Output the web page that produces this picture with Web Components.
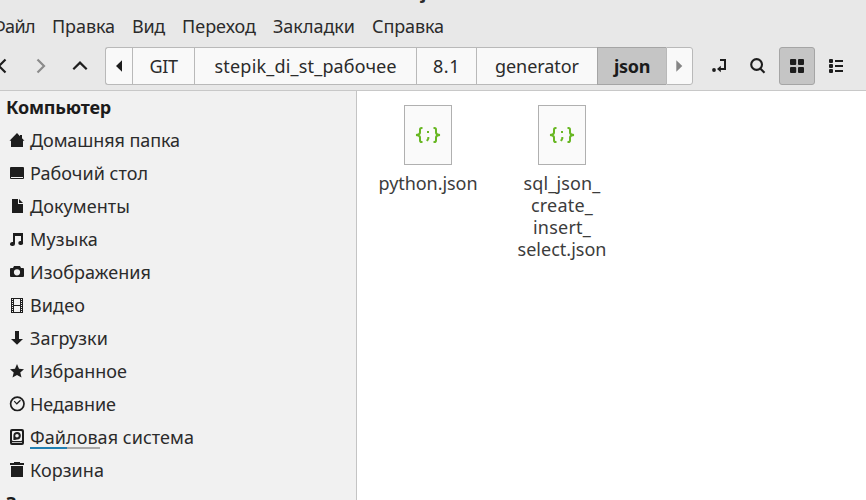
<!DOCTYPE html>
<html lang="ru">
<head>
<meta charset="utf-8">
<title>json</title>
<style>
html,body{margin:0;height:100%;overflow:hidden}
body{font:18px/22px "Noto Sans","Open Sans",sans-serif;color:#2b2b2b}
</style>
</head>
<body>
<file-window></file-window>
<script>
const ICONS = {
  home:'<path d="M8 1 0.5 8.7H2V15H14V8.7H15.5L13 6.2V3H11V4.2Z"/>',
  desktop:'<path d="M2 2H14Q15 2 15 3V13Q15 14 14 14H2Q1 14 1 13V3Q1 2 2 2ZM2 12V13H14V12Z" fill-rule="evenodd"/>',
  doc:'<path d="M3 1H9V6H14V15H3ZM10 1 14 5H10Z"/>',
  music:'<path d="M4 2H14V11.5A2.4 2 0 1 1 12 10V5H6V13A2.5 2 0 1 1 4 11Z"/>',
  camera:'<path d="M5 2H11L12 4H14Q15 4 15 5V12Q15 13 14 13H2Q1 13 1 12V5Q1 4 2 4H4ZM8 5.2A3.1 3.1 0 1 0 8 11.4A3.1 3.1 0 1 0 8 5.2Z" fill-rule="evenodd"/>',
  video:'<path d="M2 1H14V16H2ZM5 2V8H11V2ZM5 9V15H11V9ZM3 2V3H4V2ZM3 4V5H4V4ZM3 6V7H4V6ZM3 8V9H4V8ZM3 10V11H4V10ZM3 12V13H4V12ZM3 14V15H4V14ZM12 2V3H13V2ZM12 4V5H13V4ZM12 6V7H13V6ZM12 8V9H13V8ZM12 10V11H13V10ZM12 12V13H13V12ZM12 14V15H13V14Z" fill-rule="evenodd"/>',
  down:'<path d="M6 1H10V9H14L8 14.7 2 9H6Z"/>',
  star:'<path d="M8 1 10 5.8 15 6.2 11.3 9.6 12.5 14.5 8 12 3.5 14.5 4.7 9.6 1 6.2 6 5.8Z"/>',
  clock:'<g fill="none" stroke="currentColor"><circle cx="8.3" cy="7.8" r="6.7" stroke-width="1.7"/><path d="M5.2 5.2 7.8 7.8 11.5 4.2" stroke-width="1.2"/></g>',
  disk:'<path d="M3 0H13Q15 0 15 2V14Q15 16 13 16H3Q1 16 1 14V2Q1 0 3 0ZM4 2Q3 2 3 3V11Q3 12 4 12H12Q13 12 13 11V3Q13 2 12 2ZM3 13.2V14H13V13.2Z" fill-rule="evenodd"/><path d="M4.4 11V6.8A3.7 3.7 0 1 1 8 10.5L6 11ZM8 5A1.8 1.8 0 1 0 8 8.6A1.8 1.8 0 1 0 8 5Z" fill-rule="evenodd"/>',
  trash:'<path d="M5 0H11V1H15V3H1V1H5ZM2 4H14V15H2Z"/>',
  back:'<path d="M10.5 1.5 4 8 10.5 14.5" fill="none" stroke="currentColor" stroke-width="2.2"/>',
  next:'<path d="M4.5 1.5 11 8 4.5 14.5" fill="none" stroke="currentColor" stroke-width="2.2"/>',
  up:'<path d="M1.3 11.3 8 4.6 14.7 11.3" fill="none" stroke="currentColor" stroke-width="2.2"/>',
  left:'<path d="M11 2.3V13.7L5 8Z"/>',
  right:'<path d="M4.3 2.3V13.7L10.3 8Z"/>',
  path:'<path d="M9 2H14V11H8.5" fill="none" stroke="currentColor" stroke-width="2"/><path d="M9.8 7.7V14.3L6 11Z"/><circle cx="3" cy="12" r="1.9"/>',
  search:'<circle cx="6.6" cy="6.5" r="5.4" fill="none" stroke="currentColor" stroke-width="2.1"/><path d="M10.5 10.7 14.5 14.7" stroke="currentColor" stroke-width="2.1"/>',
  grid:'<rect x="1" y="1" width="6.2" height="6" rx="1"/><rect x="9" y="1" width="6" height="6" rx="1"/><rect x="1" y="9" width="6.2" height="6" rx="1"/><rect x="9" y="9" width="6" height="6" rx="1"/>',
  list:'<rect x="1" y="1" width="4" height="4" rx="1"/><rect x="1" y="6" width="4" height="4" rx="1"/><rect x="1" y="11" width="4" height="4" rx="1"/><path d="M7 2H15V4H7ZM7 7H15V9H7ZM7 12H15V14H7Z"/>'
};
const define = (name, html, after) => customElements.define(name, class extends HTMLElement {
  connectedCallback(){
    if(this.shadowRoot) return;
    this.attachShadow({mode:'open'}).innerHTML = typeof html === 'function' ? html(this) : html;
    if(after) after(this);
  }
});

define('ui-icon', el => `<style>:host{display:block;width:16px;height:16px;flex:none;color:#1d1d1d}svg{display:block;fill:currentColor}</style><svg width="16" height="16" viewBox="0 0 16 16">${ICONS[el.getAttribute('name')]}</svg>`);

/* A label whose letter spacing is adjusted so that it fills its "w" width. */
define('fit-label', el => `<style>:host{display:block;flex:none;white-space:nowrap;line-height:22px;width:${el.getAttribute('w')}px}span{display:inline-block}</style><span>${el.getAttribute('text')}</span>`, el => {
  const s = el.shadowRoot.querySelector('span');
  s.style.letterSpacing = '0px';
  const d = +el.getAttribute('w') - s.getBoundingClientRect().width;
  s.style.letterSpacing = d / s.textContent.length + 'px';
});

define('title-strip', `<style>:host{display:block;height:8px;overflow:hidden;font-weight:700}div{margin:-19px 0 0 421px}</style><div><fit-label w="38" text="json"></fit-label></div>`);

define('menu-bar', `<style>:host{display:flex;height:39px;padding-top:7px;box-sizing:border-box;gap:17px;margin-left:-9px}</style>
${[['Файл',44],['Правка',63],['Вид',33],['Переход',74],['Закладки',82],['Справка',72]].map(a=>`<fit-label text="${a[0]}" w="${a[1]}"></fit-label>`).join('')}`);

define('path-part', `<style>:host{display:flex;align-items:center;justify-content:center;box-sizing:border-box;background:#f9f9f9;border:1px solid #b9b9b9;border-right:0;height:38px}
:host([first]){border-radius:3px 0 0 3px}:host([last]){border-right:1px solid #b9b9b9;border-radius:0 3px 3px 0}
:host([active]){background:#c5c5c5;border-color:#a5a5a5;font-weight:700;color:#1b1b1b}</style><slot></slot>`);

define('tool-bar', `<style>:host{display:flex;height:43px;box-sizing:border-box}
.nav{display:flex;width:105px;height:38px;align-items:center;box-sizing:border-box;flex:none}
.tools{display:flex;height:38px;align-items:center}
.on{display:flex;align-items:center;justify-content:center;box-sizing:border-box;width:36px;height:38px;border:1px solid #a5a5a5;border-radius:3px;background:#c5c5c5;margin:0 13px 0 13px}
.search{margin-left:23px}.path{margin-left:18px}</style>
<div class="nav"><ui-icon name="back" style="margin-left:-5px"></ui-icon><ui-icon name="next" style="margin-left:22px;color:#8b8b8b"></ui-icon><ui-icon name="up" style="margin-left:23px"></ui-icon></div>
<path-part first style="width:27px"><ui-icon name="left"></ui-icon></path-part>
<path-part style="width:62px"><fit-label text="GIT" w="28"></fit-label></path-part>
<path-part style="width:222px"><fit-label text="stepik_di_st_рабочее" w="182"></fit-label></path-part>
<path-part style="width:60px"><fit-label text="8.1" w="27"></fit-label></path-part>
<path-part style="width:121px"><fit-label text="generator" w="84"></fit-label></path-part>
<path-part active style="width:69px"><fit-label text="json" w="36"></fit-label></path-part>
<path-part last style="width:27px"><ui-icon name="right" style="color:#858585"></ui-icon></path-part>
<div class="tools"><ui-icon class="path" name="path"></ui-icon><ui-icon class="search" name="search"></ui-icon><div class="on"><ui-icon name="grid"></ui-icon></div><ui-icon name="list"></ui-icon></div>`);

define('side-item', el => `<style>:host{display:flex;align-items:center;height:33px;padding-left:9px;gap:5px;position:relative}
.usage{position:absolute;left:30px;top:27px;width:70px;height:2px;background:linear-gradient(90deg,#1f7fb2 37px,#a9a9a9 37px)}</style>
<ui-icon name="${el.getAttribute('icon')}"></ui-icon><fit-label text="${el.getAttribute('text')}" w="${el.getAttribute('w')}"></fit-label>${el.hasAttribute('usage')?'<div class="usage"></div>':''}`);

define('side-heading', el => `<style>:host{display:flex;align-items:center;height:33px;padding-left:6px;font-weight:700;color:#1b1b1b}</style><fit-label text="${el.getAttribute('text')}" w="${el.getAttribute('w')}"></fit-label>`);

define('side-bar', `<style>:host{display:block;width:356px;flex:none;background:#f1f1f1;border-right:1px solid #c4c4c4;overflow:hidden}side-heading:first-of-type{margin-top:-1px}</style>
<side-heading text="Компьютер" w="105"></side-heading>
${[['home','Домашняя папка',150],['desktop','Рабочий стол',118],['doc','Документы',100],['music','Музыка',68],['camera','Изображения',121],['video','Видео',55],['down','Загрузки',78],['star','Избранное',97],['clock','Недавние',86],['disk','Файловая система',164,1],['trash','Корзина',74]].map(a=>`<side-item icon="${a[0]}" text="${a[1]}" w="${a[2]}" ${a[3]?'usage':''}></side-item>`).join('')}
<side-heading text="Закладки" w="92"></side-heading>`);

define('file-item', `<style>:host{display:flex;flex-direction:column;align-items:center;width:134px;color:#3c3c3c}
svg{display:block;margin-bottom:7px}</style>
<svg width="48" height="60" viewBox="0 0 48 60"><rect x=".5" y=".5" width="47" height="59" fill="#fafafa" stroke="#b0b0b0"/>
<g fill="none" stroke="#68b723" stroke-width="2"><path d="M18.5 23H17.5Q16 23 16 24.8V27.5Q16 29.8 12 30Q16 30.2 16 32.5V35.2Q16 37 17.5 37H18.5"/><path d="M29.5 23H30.5Q32 23 32 24.8V27.5Q32 29.8 36 30Q32 30.2 32 32.5V35.2Q32 37 30.5 37H29.5"/><path d="M24 26V28M24.3 32V33.6L23 36"/></g></svg><slot></slot>`);

define('file-grid', `<style>:host{display:flex;flex:1;background:#fff;padding:14px 0 0 4px;align-items:flex-start}</style>
<file-item><fit-label text="python.json" w="99"></fit-label></file-item>
<file-item><fit-label text="sql_json_" w="77"></fit-label><fit-label text="create_" w="62"></fit-label><fit-label text="insert_" w="58"></fit-label><fit-label text="select.json" w="89"></fit-label></file-item>`);

define('file-window', `<style>:host{display:flex;flex-direction:column;width:866px;height:500px;background:#e8e8e8;overflow:hidden}
header{flex:none;height:91px;box-sizing:border-box;border-bottom:1px solid #c8c8c8;overflow:hidden}main{display:flex;flex:1;min-height:0}</style>
<header><title-strip></title-strip><menu-bar></menu-bar><tool-bar></tool-bar></header><main><side-bar></side-bar><file-grid></file-grid></main>`);
</script>
</body>
</html>
